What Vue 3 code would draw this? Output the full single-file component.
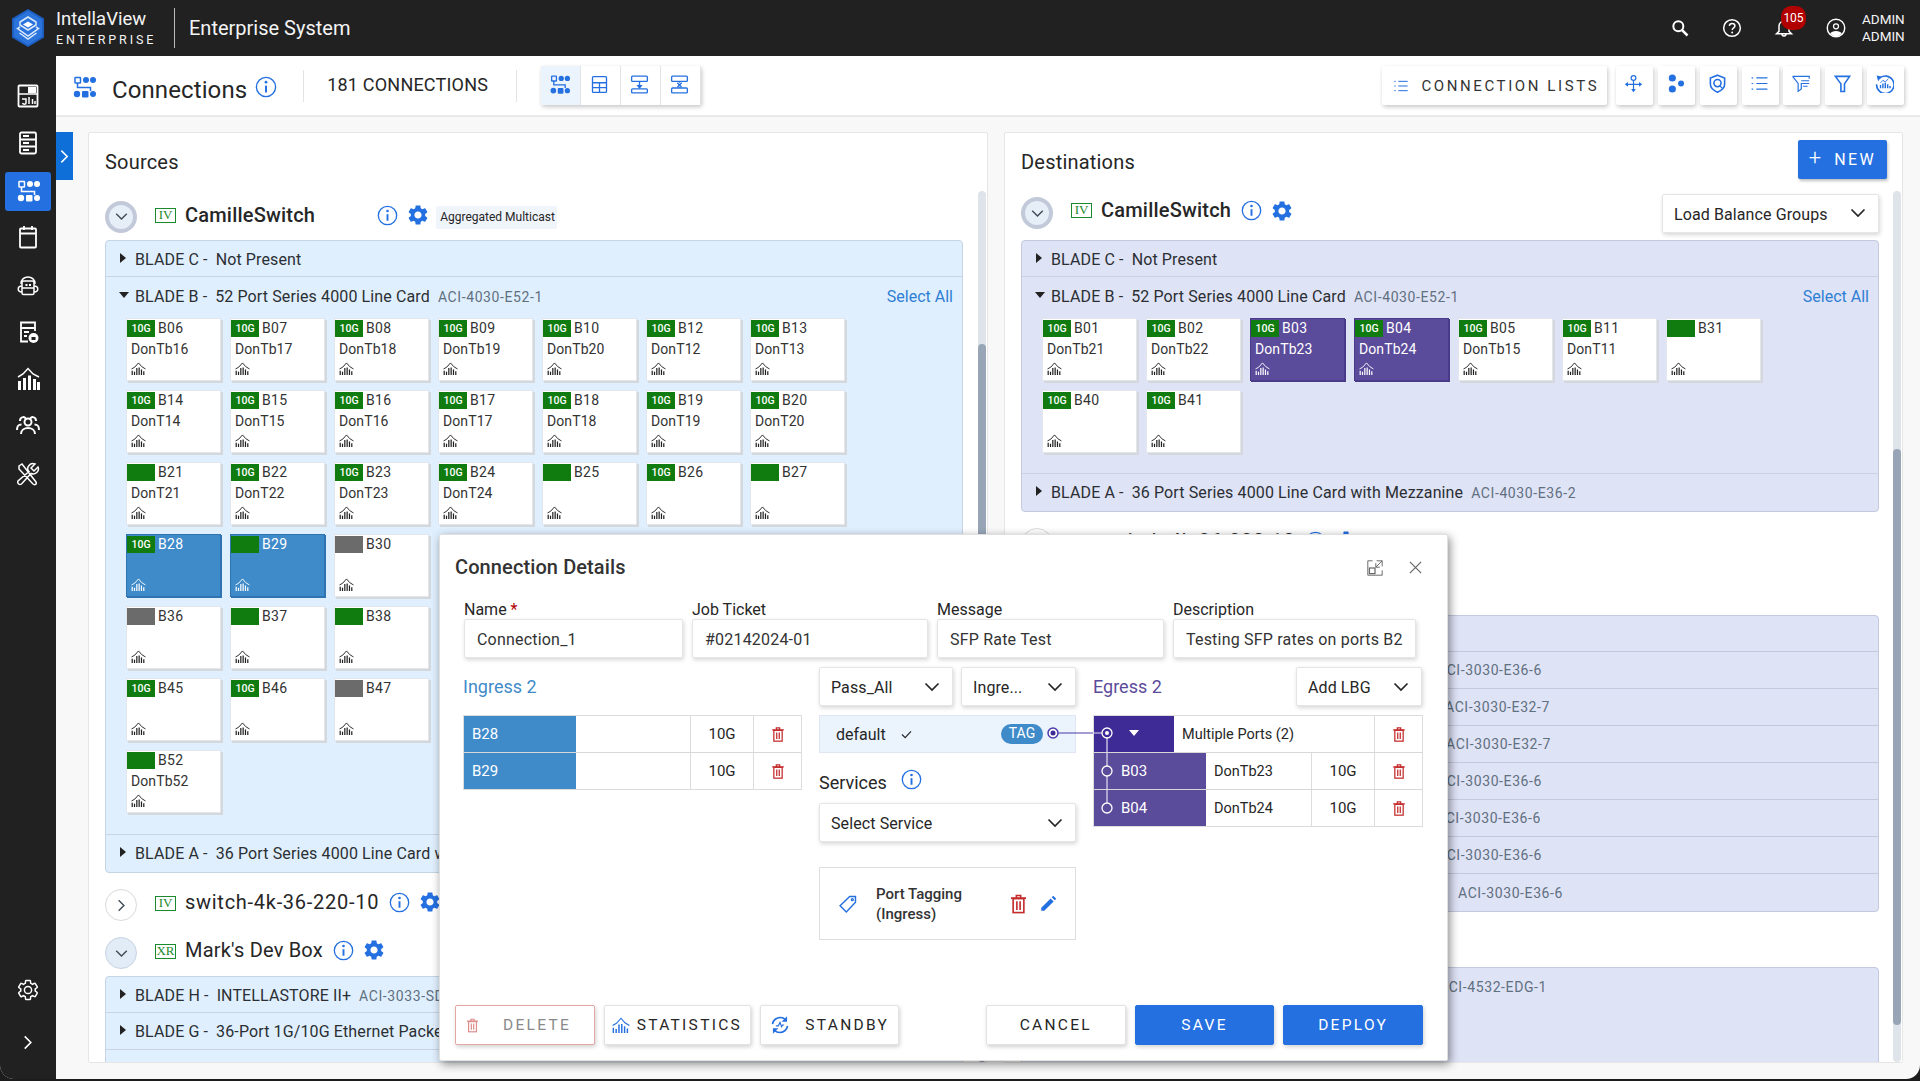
<script setup>
const c = (p, n = '', sp = true, led = 'g', sel = false) => ({ p, n, sp, led, sel })
const srcRows = [
  [c('B06','DonTb16'),c('B07','DonTb17'),c('B08','DonTb18'),c('B09','DonTb19'),c('B10','DonTb20'),c('B12','DonT12'),c('B13','DonT13')],
  [c('B14','DonT14'),c('B15','DonT15'),c('B16','DonT16'),c('B17','DonT17'),c('B18','DonT18'),c('B19','DonT19'),c('B20','DonT20')],
  [c('B21','DonT21',false),c('B22','DonT22'),c('B23','DonT23'),c('B24','DonT24'),c('B25','',false),c('B26'),c('B27','',false)],
  [c('B28','',true,'g',true),c('B29','',false,'g',true),c('B30','',false,'x')],
  [c('B36','',false,'x'),c('B37','',false),c('B38','',false)],
  [c('B45'),c('B46'),c('B47','',false,'x')],
  [c('B52','DonTb52',false)],
]
const dstRows = [
  [c('B01','DonTb21'),c('B02','DonTb22'),c('B03','DonTb23',true,'g',true),c('B04','DonTb24',true,'g',true),c('B05','DonTb15'),c('B11','DonT11'),c('B31','',false)],
  [c('B40'),c('B41')],
]
const dstCodes = [
  { code: '', left: 0 },
  { code: 'ACI-3030-E36-6', left: 415 },
  { code: 'ACI-3030-E32-7', left: 423 },
  { code: 'ACI-3030-E32-7', left: 424 },
  { code: 'ACI-3030-E36-6', left: 415 },
  { code: 'ACI-3030-E36-6', left: 414 },
  { code: 'ACI-3030-E36-6', left: 415 },
  { code: 'ACI-3030-E36-6', left: 436 },
]
const topTools = ['flow', 'table', 'split-down', 'split-x']
const rightTools = ['move', 'dots', 'shield', 'list', 'filter-list', 'funnel', 'history']
const sideTop = ['dash', 'server', 'flow', 'calendar', 'robot', 'doclock', 'chart', 'people', 'tools']
</script>

<template>
  <div class="app">
    <svg class="sprite" aria-hidden="true">
      <symbol id="logo" viewBox="0 0 36 38">
        <path d="M18 0 34 9.500V28.500L18 38 2 28.500V9.500Z" fill="#1f5fc4" />
        <path d="M18 2 32 10.500V27.500L18 36 4 27.500V10.500Z" fill="#2a74dc" />
        <g fill="none" stroke="#dbe9fb" stroke-width="1.500">
          <path d="M18 8 26 13V16L18 21 10 16V13Z" />
          <path d="M10 18 7.500 19.500 18 27 28.500 19.500 26 18" />
          <path d="M9.500 24 18 30 26.500 24" />
        </g>
        <path d="M18 12.500 23 15.500 18 18.500 13 15.500Z" fill="#fff" />
      </symbol>
      <symbol id="flow" viewBox="0 0 24 24">
        <rect x="3" y="2.500" width="5.500" height="5.500" rx=".6" />
        <circle cx="14" cy="5" r="3" fill="currentColor" stroke="none" />
        <circle cx="21" cy="5" r="3" fill="currentColor" stroke="none" />
        <path d="M5.500 8V12.500H18.500V16" />
        <circle cx="5" cy="19" r="3.200" fill="currentColor" stroke="none" />
        <rect x="10" y="16" width="6.500" height="6.500" rx="1" fill="currentColor" stroke="none" />
        <circle cx="21" cy="19" r="3" fill="currentColor" stroke="none" />
      </symbol>
      <symbol id="table" viewBox="0 0 24 24">
        <rect x="4" y="3" width="16" height="18" rx="1" /><path d="M4 10H20M12 10V21M4 15.500H20" />
      </symbol>
      <symbol id="split-down" viewBox="0 0 24 24">
        <rect x="3" y="2.500" width="18" height="6" rx="1" /><rect x="3" y="17" width="18" height="4.500" rx="1" />
        <path d="M12 8.500V16" /><path d="M8.500 12.500H15.500L12 17Z" fill="currentColor" stroke="none" />
      </symbol>
      <symbol id="split-x" viewBox="0 0 24 24">
        <rect x="3" y="2.500" width="18" height="6" rx="1" /><rect x="3" y="16" width="18" height="5.500" rx="1" />
        <path d="M12 8.500V10M12 14.500V16M9.500 10 14.500 15M14.500 10 9.500 15" />
      </symbol>
      <symbol id="lines" viewBox="0 0 24 24">
        <path d="M8 5H22M8 12H22M8 19H22" /><path d="M2 5H4M2 12H4M2 19H4" />
      </symbol>
      <symbol id="list" viewBox="0 0 24 24">
        <path d="M8 5H22M8 12H22M8 19H22" /><path d="M2 5H4M2 12H4M2 19H4" />
      </symbol>
      <symbol id="move" viewBox="0 0 24 24">
        <circle cx="12" cy="5" r="3" /><path d="M12 8V22M3 13H21" />
        <path d="M1 13 5 10V16ZM23 13 19 10V16ZM12 23 9 19H15Z" fill="currentColor" stroke="none" />
      </symbol>
      <symbol id="dots" viewBox="0 0 24 24">
        <circle cx="8" cy="5" r="4.500" fill="currentColor" stroke="none" />
        <circle cx="8" cy="19" r="4.500" fill="currentColor" stroke="none" />
        <circle cx="19" cy="12" r="3.800" fill="currentColor" stroke="none" />
      </symbol>
      <symbol id="shield" viewBox="0 0 24 24">
        <path d="M12 1.500 21 5V13C21 18 16.500 21 12 23 7.500 21 3 18 3 13V5Z" stroke-width="2" />
        <circle cx="12" cy="11.500" r="4.500" stroke-width="2" /><path d="M15 15 18 18" />
      </symbol>
      <symbol id="filter-list" viewBox="0 0 24 24">
        <path d="M2 3H23V6M2 3 9 12V22L13 19V12H15" />
        <path d="M13 8.500H23M15 12H23M15 15.500H21" />
      </symbol>
      <symbol id="funnel" viewBox="0 0 24 24">
        <path d="M3 3H21L14.500 12.500V22H10V12.500Z" stroke-width="2" />
      </symbol>
      <symbol id="history" viewBox="0 0 24 24">
        <path d="M5 6A11 11 0 1 1 2 13" stroke-width="2" /><path d="M2 2 8 3 4 9Z" fill="currentColor" stroke="none" />
        <path d="M7 18V14M10 18V12M13 18V11M16 18V13M19 18V15" stroke-width="1.800" />
        <path d="M7 11 10 8 13 10 17 6" stroke-width="1.200" />
      </symbol>
      <symbol id="info" viewBox="0 0 24 24">
        <circle cx="12" cy="12" r="10.500" /><path d="M12 10.500V18" stroke-width="2.200" /><circle cx="12" cy="6.800" r="1.500" fill="currentColor" stroke="none" />
      </symbol>
      <symbol id="gear" viewBox="0 0 24 24">
        <path fill="currentColor" stroke="none" d="M19.140 12.940c.04-.3.06-.61.06-.94 0-.32-.02-.64-.07-.94l2.030-1.580c.18-.14.23-.41.12-.61l-1.920-3.320c-.12-.22-.37-.29-.59-.22l-2.390.96c-.5-.38-1.030-.7-1.620-.94l-.36-2.540c-.04-.24-.24-.41-.48-.41h-3.840c-.24 0-.43.17-.47.41l-.36 2.540c-.59.24-1.130.57-1.620.94l-2.390-.96c-.22-.08-.47 0-.59.22L2.740 8.870c-.12.21-.08.47.12.61l2.030 1.580c-.05.3-.09.63-.09.94s.02.64.07.94l-2.030 1.580c-.18.14-.23.41-.12.61l1.920 3.320c.12.22.37.29.59.22l2.390-.96c.5.38 1.030.7 1.620.94l.36 2.540c.05.24.24.41.48.41h3.840c.24 0 .44-.17.47-.41l.36-2.540c.59-.24 1.130-.56 1.620-.94l2.390.96c.22.08.47 0 .59-.22l1.920-3.320c.12-.22.07-.47-.12-.61l-2.010-1.580zM12 15.600c-1.980 0-3.600-1.620-3.600-3.600s1.620-3.600 3.600-3.600 3.600 1.620 3.600 3.600-1.620 3.600-3.600 3.600z" />
      </symbol>
      <symbol id="gear-line" viewBox="0 0 24 24">
        <path d="M19.140 12.940c.04-.3.06-.61.06-.94 0-.32-.02-.64-.07-.94l2.030-1.580c.18-.14.23-.41.12-.61l-1.920-3.320c-.12-.22-.37-.29-.59-.22l-2.390.96c-.5-.38-1.030-.7-1.620-.94l-.36-2.540c-.04-.24-.24-.41-.48-.41h-3.840c-.24 0-.43.17-.47.41l-.36 2.540c-.59.24-1.130.57-1.620.94l-2.390-.96c-.22-.08-.47 0-.59.22L2.740 8.870c-.12.21-.08.47.12.61l2.030 1.580c-.05.3-.09.63-.09.94s.02.64.07.94l-2.030 1.580c-.18.14-.23.41-.12.61l1.920 3.320c.12.22.37.29.59.22l2.390-.96c.5.38 1.030.7 1.620.94l.36 2.540c.05.24.24.41.48.41h3.840c.24 0 .44-.17.47-.41l.36-2.540c.59-.24 1.130-.56 1.620-.94l2.390.96c.22.08.47 0 .59-.22l1.920-3.320c.12-.22.07-.47-.12-.61l-2.010-1.580z" />
        <circle cx="12" cy="12" r="3.600" />
      </symbol>
      <symbol id="stat" viewBox="0 0 16 14">
        <path d="M1.200 14V9.500M3.700 14V10.500M6.200 14V6.500M8.700 14V6M11.200 14V8M13.700 14V10" stroke-width="1.300" />
        <path d="M.5 7.500 4 5.500 8 1 11.500 5 15.500 7.500" stroke-width="1" />
      </symbol>
      <symbol id="trash" viewBox="0 0 14 18">
        <rect x="2" y="4" width="10" height="13" /><path d="M0 3.500H14M5 3.500V1H9V3.500M5.500 6.500V14.500M8.500 6.500V14.500" />
      </symbol>
      <symbol id="down" viewBox="0 0 16 10"><path d="M1.500 1.500 8 8 14.500 1.500" stroke-width="1.700" /></symbol>
      <symbol id="right" viewBox="0 0 10 16"><path d="M1.500 1.500 8 8 1.500 14.500" stroke-width="1.700" /></symbol>
      <symbol id="search" viewBox="0 0 24 24"><circle cx="10" cy="10" r="6" stroke-width="2.400" /><path d="M14.500 14.500 21 21" stroke-width="3" /></symbol>
      <symbol id="help" viewBox="0 0 24 24">
        <circle cx="12" cy="12" r="10" stroke-width="1.800" /><path d="M8.800 9.500C9 7 11 6.500 12.200 6.500 14 6.500 15.500 7.800 15.500 9.500 15.500 11.800 12.200 11.800 12.200 14.500" stroke-width="1.800" /><circle cx="12.200" cy="17.500" r="1.200" fill="currentColor" stroke="none" />
      </symbol>
      <symbol id="bell" viewBox="0 0 24 24">
        <path d="M6 16V10C6 6 9 4 12 4S18 6 18 10V16L21 19H3ZM9.500 19C9.500 22.500 14.500 22.500 14.500 19" stroke-width="1.800" />
      </symbol>
      <symbol id="user" viewBox="0 0 24 24">
        <circle cx="12" cy="12" r="10.500" stroke-width="1.700" /><circle cx="12" cy="10" r="3" stroke-width="1.500" />
        <path d="M5 19C7 14.500 17 14.500 19 19 15 23 9 23 5 19Z" fill="currentColor" stroke="none" />
      </symbol>
      <symbol id="dash" viewBox="0 0 24 24">
        <rect x="2.500" y="1.500" width="19" height="21" rx="1" stroke-width="1.800" /><rect x="12" y="3" width="8" height="6" fill="currentColor" stroke="none" />
        <path d="M2.500 10H21.500M6 15H10V19C10 20.500 7 20.500 6.500 19M13 13V20M16.500 15V20M19 17V20" stroke-width="1.500" />
      </symbol>
      <symbol id="server" viewBox="0 0 24 24">
        <rect x="4" y="1.500" width="16" height="21" rx="1.500" stroke-width="1.800" /><path d="M4 8.500H20M4 15.500H20M7 5H13M7 12H13M7 19H13" stroke-width="1.800" />
      </symbol>
      <symbol id="calendar" viewBox="0 0 24 24">
        <rect x="4" y="3.500" width="16" height="19" rx="1" stroke-width="1.800" /><path d="M4 8.500H20M8 1V5M16 1V5" stroke-width="1.800" />
      </symbol>
      <symbol id="robot" viewBox="0 0 24 24">
        <path d="M5 11C5 1.500 19 1.500 19 11" stroke-width="1.500" /><rect x="6" y="8" width="12" height="13.500" rx="1.500" stroke-width="1.500" />
        <path d="M6 13C1 13 1 19 6 19M18 13C23 13 23 19 18 19M6 15H18" stroke-width="1.500" /><rect x="9.500" y="11" width="2" height="2" fill="currentColor" stroke="none" /><rect x="13" y="11" width="2" height="2" fill="currentColor" stroke="none" />
      </symbol>
      <symbol id="doclock" viewBox="0 0 24 24">
        <path d="M12 21.500H5V2.500H19V11M5 8H19M8 12H13M8 16H11" stroke-width="1.800" /><circle cx="17.500" cy="18" r="5" fill="currentColor" stroke="none" /><rect x="15.500" y="17" width="4" height="3" fill="#212121" stroke="none" />
      </symbol>
      <symbol id="chart" viewBox="0 0 24 24">
        <path d="M3.500 23V14M8.500 23V11M13.500 23V8.500M18.500 23V12M22.500 23V15" stroke-width="3" /><path d="M2 10 7 7 12 1.500 17 7 23 10" stroke-width="1.500" />
      </symbol>
      <symbol id="people" viewBox="0 0 24 24">
        <circle cx="12" cy="8" r="3.500" stroke-width="2" /><path d="M5 20C5 12 19 12 19 20M4 7C4 2 10 2 10 6M20 7C20 2 14 2 14 6M1 16C1 11 3 10.500 5.500 10.500M23 16C23 11 21 10.500 18.500 10.500" stroke-width="2" />
      </symbol>
      <symbol id="tools" viewBox="0 0 24 24">
        <path d="M3 4 6 2 20 20C21 22 19 23.500 17 22L3 7ZM22 5 18 9 15 6 19 2C14 0 9.500 6 13 9.500L2 19C1 21.500 3.500 23.500 5.500 22L15 11.500C19 13.500 24 9 22 5Z" stroke-width="1.500" />
      </symbol>
      <symbol id="tag" viewBox="0 0 24 24">
        <path d="M14 3H21V10L10 21.500 2.500 14ZM17 6.500 17 6.500" stroke-width="1.700" /><circle cx="17.200" cy="6.800" r="1.200" />
      </symbol>
      <symbol id="pencil" viewBox="0 0 24 24">
        <path d="M3 17 15.500 4.500 19.500 8.500 7 21H3ZM17 3 19 1 23 5 21 7Z" fill="currentColor" stroke="none" />
      </symbol>
      <symbol id="sync" viewBox="0 0 24 24">
        <path d="M3 11C3.500 6 8 3 12.500 3 15 3 17 4 18.500 5.500M21 13C20.500 18 16 21 11.500 21 9 21 7 20 5.500 18.500" stroke-width="2" />
        <path d="M20.500 1.500V8H14ZM3.500 22.500V16H10Z" fill="currentColor" stroke="none" /><path d="M7 13 10 13 12 9 14 14 15 12 17 12" stroke-width="1.400" />
      </symbol>
      <symbol id="expand" viewBox="0 0 20 20">
        <path d="M7 1H1V19H19V13M1 1M12 1H19V8M19 1 11 9M11 4V9H16" stroke-width="1.200" />
        <rect x="3" y="10" width="7" height="7" />
      </symbol>
      <symbol id="close" viewBox="0 0 16 16"><path d="M2 2 14 14M14 2 2 14" stroke-width="1.300" /></symbol>
    </svg>

    <header class="topbar">
      <svg class="logo"><use href="#logo" /></svg>
      <div class="brand"><div class="brand-a">IntellaView</div><div class="brand-b">ENTERPRISE</div></div>
      <div class="brand-div"></div>
      <div class="sys">Enterprise System</div>
      <div class="top-right">
        <svg class="i ti"><use href="#search" /></svg>
        <svg class="i ti"><use href="#help" /></svg>
        <div class="bell"><svg class="i ti"><use href="#bell" /></svg><span class="bell-badge">105</span></div>
        <svg class="i ti"><use href="#user" /></svg>
        <div class="admin"><div>ADMIN</div><div>ADMIN</div></div>
      </div>
    </header>

    <div class="shell">
      <nav class="side">
        <div class="side-items">
          <div v-for="s in sideTop" :key="s" class="side-item" :class="{ active: s === 'flow' }">
            <svg class="i si"><use :href="'#' + s" /></svg>
          </div>
        </div>
        <div class="side-foot">
          <svg class="i si"><use href="#gear-line" /></svg>
          <svg class="i sc"><use href="#right" /></svg>
        </div>
      </nav>

      <main class="main">
        <div class="toolbar">
          <svg class="i t-flow"><use href="#flow" /></svg>
          <h1 class="t-title">Connections</h1>
          <svg class="i t-info"><use href="#info" /></svg>
          <div class="t-div"></div>
          <div class="t-count">181 CONNECTIONS</div>
          <div class="t-div t-div2"></div>
          <div class="t-group">
            <div v-for="(t, i) in topTools" :key="t" class="t-btn" :class="{ on: i === 0 }"><svg class="i"><use :href="'#' + t" /></svg></div>
          </div>
          <div class="t-right">
            <div class="lists-btn"><svg class="i"><use href="#lines" /></svg><span>CONNECTION LISTS</span></div>
            <div v-for="t in rightTools" :key="t" class="r-btn"><svg class="i"><use :href="'#' + t" /></svg></div>
          </div>
        </div>

        <div class="content">
          <div class="tab"><svg class="i tab-i"><use href="#right" /></svg></div>

          <section class="panel src">
            <h2 class="p-title">Sources</h2>
            <div class="scroll-body">
              <div class="head">
                <div class="tog tog-focus"><svg class="i"><use href="#down" /></svg></div>
                <span class="iv">IV</span><span class="sw-name strong">CamilleSwitch</span>
                <svg class="i hi hi-far"><use href="#info" /></svg><svg class="hg"><use href="#gear" /></svg>
                <span class="agg">Aggregated Multicast</span>
              </div>
              <div class="blade">
                <div class="b-row"><i class="car"></i><span class="b-t">BLADE C -</span><span>Not Present</span></div>
                <div class="b-open">
                  <div class="b-row bare"><i class="car dn"></i><span class="b-t">BLADE B -</span><span>52 Port Series 4000 Line Card</span><span class="code">ACI-4030-E52-1</span><span class="all">Select All</span></div>
                  <div class="cards">
                    <div v-for="(r, ri) in srcRows" :key="ri" class="c-row">
                      <div v-for="k in r" :key="k.p" class="card" :class="{ 'sel-b': k.sel }">
                        <div class="c-top"><span class="sp" :class="{ gray: k.led === 'x' }">{{ k.sp ? '10G' : '' }}</span><span class="port">{{ k.p }}</span></div>
                        <div class="c-name">{{ k.n }}</div>
                        <svg class="i c-stat"><use href="#stat" /></svg>
                      </div>
                    </div>
                  </div>
                </div>
                <div class="b-row last"><i class="car"></i><span class="b-t">BLADE A -</span><span>36 Port Series 4000 Line Card with Mezzanine</span><span class="code">ACI-4030-E36-2</span></div>
              </div>
              <div class="head gap1">
                <div class="tog tog-plain"><svg class="i r"><use href="#right" /></svg></div>
                <span class="iv">IV</span><span class="sw-name">switch-4k-36-220-10</span>
                <svg class="i hi"><use href="#info" /></svg><svg class="hg"><use href="#gear" /></svg>
              </div>
              <div class="head gap2">
                <div class="tog tog-open"><svg class="i"><use href="#down" /></svg></div>
                <span class="iv">XR</span><span class="sw-name">Mark's Dev Box</span>
                <svg class="i hi"><use href="#info" /></svg><svg class="hg"><use href="#gear" /></svg>
              </div>
              <div class="blade">
                <div class="b-row"><i class="car"></i><span class="b-t">BLADE H -</span><span>INTELLASTORE II+</span><span class="code">ACI-3033-SD</span></div>
                <div class="b-row"><i class="car"></i><span class="b-t">BLADE G -</span><span>36-Port 1G/10G Ethernet Packet Broker</span></div>
                <div class="b-row"><i class="car"></i><span class="b-t">BLADE F -</span><span>36-Port 100/100 Ethernet</span></div>
              </div>
            </div>
            <div class="bar"><div class="thumb thumb-src"></div></div>
          </section>

          <section class="panel dst">
            <div class="d-title">
              <h2 class="p-title flat">Destinations</h2>
              <div class="new-btn"><span class="plus">+</span><span>NEW</span></div>
            </div>
            <div class="scroll-body">
              <div class="head dhead">
                <div class="tog tog-focus"><svg class="i"><use href="#down" /></svg></div>
                <span class="iv">IV</span><span class="sw-name strong">CamilleSwitch</span>
                <svg class="i hi"><use href="#info" /></svg><svg class="hg"><use href="#gear" /></svg>
                <div class="sel lbg"><span>Load Balance Groups</span><svg class="i"><use href="#down" /></svg></div>
              </div>
              <div class="blade lav">
                <div class="b-row"><i class="car"></i><span class="b-t">BLADE C -</span><span>Not Present</span></div>
                <div class="b-open">
                  <div class="b-row bare"><i class="car dn"></i><span class="b-t">BLADE B -</span><span>52 Port Series 4000 Line Card</span><span class="code">ACI-4030-E52-1</span><span class="all">Select All</span></div>
                  <div class="cards dcards">
                    <div v-for="(r, ri) in dstRows" :key="ri" class="c-row">
                      <div v-for="k in r" :key="k.p" class="card" :class="{ 'sel-p': k.sel }">
                        <div class="c-top"><span class="sp">{{ k.sp ? '10G' : '' }}</span><span class="port">{{ k.p }}</span></div>
                        <div class="c-name">{{ k.n }}</div>
                        <svg class="i c-stat"><use href="#stat" /></svg>
                      </div>
                    </div>
                  </div>
                </div>
                <div class="b-row last"><i class="car"></i><span class="b-t">BLADE A -</span><span>36 Port Series 4000 Line Card with Mezzanine</span><span class="code">ACI-4030-E36-2</span></div>
              </div>
              <div class="head dgap">
                <div class="tog tog-plain"><svg class="i r"><use href="#right" /></svg></div>
                <span class="iv">IV</span><span class="sw-name">switch-4k-36-220-10</span>
                <svg class="i hi"><use href="#info" /></svg><svg class="hg"><use href="#gear" /></svg>
              </div>
              <div class="blade lav dblade2">
                <div v-for="(r, i) in dstCodes" :key="i" class="b-row" :class="{ last: i === dstCodes.length - 1 }">
                  <span class="code flat" :style="{ marginLeft: r.left + 'px' }">{{ r.code }}</span>
                </div>
              </div>
              <div class="blade lav dblade3">
                <div class="b-row noline"><span class="code c3">ACI-4532-EDG-1</span></div>
              </div>
            </div>
            <div class="bar"><div class="thumb thumb-dst"></div></div>
          </section>
        </div>
      </main>
    </div>

    <div class="modal">
      <div class="m-head">
        <h3>Connection Details</h3>
        <svg class="i m-exp"><use href="#expand" /></svg>
        <svg class="i m-close"><use href="#close" /></svg>
      </div>
      <div class="m-fields">
        <label><span class="lab">Name <em>*</em></span><div class="inp">Connection_1</div></label>
        <label><span class="lab">Job Ticket</span><div class="inp">#02142024-01</div></label>
        <label><span class="lab">Message</span><div class="inp">SFP Rate Test</div></label>
        <label><span class="lab">Description</span><div class="inp"><span class="clip">Testing SFP rates on ports B28</span></div></label>
      </div>
      <div class="m-lower">
        <div class="col-in">
          <div class="col-h ing">Ingress 2</div>
          <div class="tb">
            <div class="tr"><span class="td t-port">B28</span><span class="td t-sp"></span><span class="td t-rate">10G</span><span class="td t-del"><svg class="i tr-i"><use href="#trash" /></svg></span></div>
            <div class="tr"><span class="td t-port">B29</span><span class="td t-sp"></span><span class="td t-rate">10G</span><span class="td t-del"><svg class="i tr-i"><use href="#trash" /></svg></span></div>
          </div>
        </div>
        <div class="col-mid">
          <div class="sel-row">
            <div class="sel pass"><span>Pass_All</span><svg class="i"><use href="#down" /></svg></div>
            <div class="sel ingre"><span>Ingre...</span><svg class="i"><use href="#down" /></svg></div>
          </div>
          <div class="def"><span>default</span><svg class="i ck" viewBox="0 0 12 10"><path d="M1 5 4.500 8.500 11 1.500" /></svg><span class="tagp">TAG</span></div>
          <div class="svc"><span>Services</span><svg class="i"><use href="#info" /></svg></div>
          <div class="sel full"><span>Select Service</span><svg class="i"><use href="#down" /></svg></div>
          <div class="ptag">
            <svg class="i pt-i"><use href="#tag" /></svg>
            <div class="pt-t">Port Tagging<br />(Ingress)</div>
            <svg class="i pt-del"><use href="#trash" /></svg>
            <svg class="i pt-ed"><use href="#pencil" /></svg>
          </div>
        </div>
        <div class="col-eg">
          <div class="eg-h"><div class="col-h egr">Egress 2</div><div class="sel addl"><span>Add LBG</span><svg class="i"><use href="#down" /></svg></div></div>
          <div class="tb eg">
            <div class="tr"><span class="td e-multi"><i class="car wdn"></i></span><span class="td e-label">Multiple Ports (2)</span><span class="td t-del"><svg class="i tr-i"><use href="#trash" /></svg></span></div>
            <div class="tr"><span class="td e-port">B03</span><span class="td e-nm">DonTb23</span><span class="td e-rate">10G</span><span class="td t-del"><svg class="i tr-i"><use href="#trash" /></svg></span></div>
            <div class="tr"><span class="td e-port">B04</span><span class="td e-nm">DonTb24</span><span class="td e-rate">10G</span><span class="td t-del"><svg class="i tr-i"><use href="#trash" /></svg></span></div>
          </div>
        </div>
        <svg class="wire" width="80" height="120" viewBox="0 0 80 120">
          <path d="M11 18H46" stroke="#4a3aa8" fill="none" stroke-width="1.200" />
          <circle cx="6" cy="18" r="5" fill="#fff" stroke="#4a3aa8" stroke-width="1.500" /><circle cx="6" cy="18" r="2.500" fill="#3f2b96" />
          <path d="M46 18H60M60 18V93" stroke="#e3e0f3" fill="none" stroke-width="1.200" />
          <circle cx="60" cy="18" r="5" fill="#3f2b96" stroke="#fff" stroke-width="1.300" /><circle cx="60" cy="18" r="2" fill="#fff" />
          <circle cx="60" cy="56" r="5" fill="#5b4b9b" stroke="#fff" stroke-width="1.300" />
          <circle cx="60" cy="93" r="5" fill="#5b4b9b" stroke="#fff" stroke-width="1.300" />
        </svg>
      </div>
      <div class="m-foot">
        <div class="fb del"><svg class="i"><use href="#trash" /></svg><span>DELETE</span></div>
        <div class="fb stats"><svg class="i"><use href="#stat" /></svg><span>STATISTICS</span></div>
        <div class="fb standby"><svg class="i"><use href="#sync" /></svg><span>STANDBY</span></div>
        <div class="fb cancel">CANCEL</div>
        <div class="fb pri">SAVE</div>
        <div class="fb pri">DEPLOY</div>
      </div>
    </div>
  </div>
</template>

<style>
html, body { margin: 0; background: #1c1c1c; }
</style>

<style scoped>
.app { position: relative; width: 1920px; height: 1079px; overflow: hidden; background: #f8f8f8; border-radius: 0 0 14px 14px; font-family: Roboto, "Liberation Sans", sans-serif; color: #262626; font-size: 15px; }
.sprite { position: absolute; width: 0; height: 0; }
.i { fill: none; stroke: currentColor; stroke-width: 1.500; }
h1, h2, h3 { margin: 0; font-weight: 400; }

.topbar { height: 56px; background: #212121; color: #f4f4f4; display: flex; align-items: center; }
.logo { width: 36px; height: 38px; margin-left: 10px; }
.brand { margin-left: 10px; width: 118px; }
.brand-a { font-size: 18.500px; line-height: 22px; margin-top: -1px; }
.brand-b { font-size: 12.500px; line-height: 16px; letter-spacing: 2.850px; margin-top: 2px; }
.brand-div { width: 1px; height: 40px; background: #bbb; }
.sys { margin-left: 14px; font-size: 20px; }
.top-right { margin-left: auto; display: flex; align-items: center; padding-right: 17px; }
.ti { width: 20px; height: 20px; color: #fff; margin-right: 32px; }
.bell { position: relative; display: flex; }
.bell-badge { position: absolute; left: 7px; top: -12px; width: 25px; height: 24px; border-radius: 10px; background: #b00000; color: #fff; font-size: 12px; text-align: center; line-height: 24px; }
.admin { font-size: 13.500px; line-height: 17px; margin-left: -16px; width: 41px; }

.shell { display: flex; height: calc(100% - 56px); }
.side { width: 56px; background: #212121; color: #fff; display: flex; flex-direction: column; justify-content: space-between; flex: none; }
.side-items { display: flex; flex-direction: column; align-items: center; padding-top: 20px; gap: 8.250px; }
.side-item { width: 46px; height: 39px; border-radius: 3px; display: flex; align-items: center; justify-content: center; }
.side-item.active { background: #2470e0; margin: 1px 0 -1px; }
.si { width: 24px; height: 24px; }
.side-foot { display: flex; flex-direction: column; align-items: center; padding-bottom: 29px; gap: 33px; }
.sc { width: 10px; height: 15px; }

.main { flex: 1; min-width: 0; display: flex; flex-direction: column; }
.toolbar { height: 59px; background: #fff; border-bottom: 2px solid #e9e9e9; display: flex; align-items: center; padding: 0 16px 0 16px; flex: none; box-sizing: content-box; }
.t-flow { width: 24px; height: 24px; color: #2470e0; margin-top: 3px; }
.t-title { font-size: 24px; margin-left: 16px; letter-spacing: .1px; margin-top: 8px; }
.t-info { width: 22px; height: 22px; color: #2470e0; margin-left: 8px; margin-top: 3px; }
.t-div { width: 1px; height: 32px; background: #e3e3e3; margin-left: 26px; }
.t-count { font-size: 18px; margin-left: 23px; margin-top: -2px; letter-spacing: .2px; }
.t-div2 { margin-left: 28px; }
.t-group { display: flex; margin-left: 24px; box-shadow: 1px 2px 4px rgba(0,0,0,.22); border-radius: 2px; }
.t-btn { width: 40px; height: 39px; display: flex; align-items: center; justify-content: center; background: #fff; color: #2470e0; border-right: 1px solid #e3e3e3; box-sizing: border-box; }
.t-btn.on { background: #ebf3fd; }
.t-btn svg { width: 21px; height: 21px; margin-right: 2px; margin-top: -3px; }
.t-right { margin-left: auto; display: flex; gap: 4.800px; }
.lists-btn { width: 225px; height: 39px; margin-right: 4px; background: #fff; border-radius: 2px; box-shadow: 1px 2px 4px rgba(0,0,0,.22); display: flex; align-items: center; font-size: 15px; letter-spacing: 2.600px; color: #333; }
.lists-btn svg { width: 16px; height: 16px; margin: 0 12px 0 11px; color: #2470e0; }
.r-btn { width: 37px; height: 39px; background: #fff; border-radius: 2px; box-shadow: 1px 2px 4px rgba(0,0,0,.22); display: flex; align-items: center; justify-content: center; color: #2470e0; }
.r-btn svg { width: 19px; height: 19px; margin: -4px 2px 0 0; }

.content { flex: 1; min-height: 0; display: flex; padding: 15px 17px 16px 0; position: relative; }
.tab { width: 17px; height: 48px; background: #0f6fd8; flex: none; display: flex; align-items: center; justify-content: center; margin-right: 15px; color: #fff; }
.tab-i { width: 9px; height: 15px; }
.panel { position: relative; background: #fff; border: 1px solid #e6e6e6; border-radius: 2px; display: flex; flex-direction: column; box-sizing: border-box; min-height: 0; }
.src { width: 900px; margin-right: 16px; }
.dst { width: 899px; }
.p-title { font-size: 20px; height: 67px; line-height: 58px; padding-left: 16px; letter-spacing: .2px; }
.p-title.flat { height: auto; }
.d-title { height: 60px; display: flex; justify-content: space-between; padding-right: 15px; flex: none; align-items: flex-start; }
.new-btn { margin-top: 7px; width: 89px; height: 39px; background: #2470e0; border-radius: 2px; color: #fff; display: flex; align-items: center; justify-content: center; gap: 13px; font-size: 16px; letter-spacing: 2.400px; box-shadow: 1px 2px 3px rgba(0,0,0,.25); }
.plus { font-size: 22px; font-weight: 300; letter-spacing: 0; line-height: 20px; margin-top: -4px; }
.scroll-body { flex: 1; min-height: 0; overflow: hidden; padding: 0 23px 0 16px; }
.src .scroll-body { padding-right: 24px; }

.head { display: flex; align-items: center; height: 33px; }
.gap1 { margin-top: 16px; height: 32px; }
.gap2 { margin-top: 16px; margin-bottom: 7px; height: 32px; }
.src .head:first-child { margin-bottom: 7px; }
.dhead { height: 32px; margin-top: 4px; margin-bottom: 11px; position: relative; }
.dgap { margin-top: 16px; height: 32px; }
.tog { width: 32px; height: 32px; border-radius: 50%; display: flex; align-items: center; justify-content: center; box-sizing: border-box; flex: none; color: #3e4a55; }
.tog svg { width: 13px; height: 9px; stroke-width: 1.300; }
.tog svg.r { width: 9px; height: 13px; }
.tog-focus { background: #e6eef8; border: 4px solid #c2c9d8; }
.tog-plain { background: #fff; border: 1px solid #dadada; }
.tog-open { background: #e2ecf7; border: 1px solid #c7d3e3; }
.iv { margin-left: 18px; margin-top: -2px; width: 21px; height: 15px; box-sizing: border-box; border: 1.500px solid #1b8a2e; color: #1b8a2e; font-family: "Liberation Serif", serif; font-size: 13px; line-height: 12px; text-align: center; flex: none; }
.sw-name { margin-left: 9px; margin-top: -6px; font-size: 20px; letter-spacing: .72px; color: #262626; }
.gap2 .sw-name { letter-spacing: .2px; }
.sw-name.strong { font-weight: 500; margin-top: -3px; letter-spacing: .2px; }
.hi { width: 21px; height: 21px; color: #2470e0; margin-left: 10px; margin-top: -6px; flex: none; }
.hi-far { margin-left: 62px; margin-top: -3px; }
.hg { width: 24px; height: 24px; color: #2470e0; margin-left: 8px; margin-top: -6px; flex: none; }
.hi-far + .hg { margin-top: -3px; }
.gap1 .iv, .gap2 .iv { margin-top: -4px; }
.agg { margin-left: 6px; background: #f0f4fb; font-size: 12px; height: 23px; line-height: 23px; padding: 0 4px; border-radius: 2px; width: 113px; white-space: nowrap; margin-top: 2px; }
.dhead .iv { margin-top: -5px; }
.dhead .sw-name { margin-top: -6px; }
.dhead .hi, .dhead .hg { margin-top: -5px; }
.sel { background: #fff; border: 1px solid #e5e5e5; border-radius: 2px; box-shadow: 1px 2px 4px rgba(0,0,0,.16); height: 39px; display: flex; align-items: center; justify-content: space-between; box-sizing: border-box; padding: 0 12px 0 11px; font-size: 16px; color: #262626; letter-spacing: .1px; }
.sel span { margin-top: 2px; }
.sel svg { width: 16px; height: 10px; flex: none; }
.lbg { margin-left: auto; width: 217px; }

.blade { background: #e0effe; border: 1px solid #c6d5e4; border-radius: 4px; }
.blade.lav { background: #dfe3f6; border-color: #c5c9df; }
.b-row { height: 37px; box-sizing: border-box; display: flex; align-items: center; padding-left: 14px; border-bottom: 1px solid #c9d3e2; font-size: 16px; white-space: nowrap; color: #2b2f33; letter-spacing: .12px; }
.blade > .b-row:first-child { height: 36px; padding-top: 2px; }
.b-row.bare { padding-top: 2px; }
.b-row.last, .b-row.bare { border-bottom: 0; }
.b-row.noline { border: 0; }
.car { display: block; width: 0; height: 0; border-style: solid; border-width: 5px 0 5px 6px; border-color: transparent transparent transparent #222; margin-right: 9px; margin-top: -3px; flex: none; }
.car.dn { border-width: 6px 5px 0; border-color: #222 transparent transparent; margin-left: -1px; margin-right: 6px; }
.b-t { margin-right: 8px; }
.code { color: #5f7080; font-size: 14px; margin-left: 8px; letter-spacing: .6px; }
.code.flat { margin-left: 0; }
.code.c3 { margin-left: 417px; }
.dblade2 .b-row, .dblade3 .b-row { padding-left: 0; padding-top: 0; }
.all { margin-left: auto; margin-right: 9px; color: #2e7fd3; letter-spacing: 0; }
.b-open { border-bottom: 1px solid #c9d3e2; }
.cards { padding: 5px 0 22px 21px; display: flex; flex-direction: column; gap: 11px; }
.dcards { padding-bottom: 21px; }
.c-row { display: flex; gap: 11px; }
.card { width: 93px; height: 61px; background: #fff; box-shadow: 0 0 0 1px #e2e6ea, 2px 2px 0 1px #d4d7db; display: flex; flex-direction: column; font-size: 14px; color: #333; }
.c-top { display: flex; height: 18px; align-items: center; }
.sp { width: 28px; height: 17px; background: #107c10; color: #fff; font-size: 10.500px; font-weight: 500; text-align: center; line-height: 17px; flex: none; }
.sp.gray { background: #6b6b6b; }
.port { margin-left: 3px; letter-spacing: .3px; }
.c-name { height: 21px; line-height: 23px; padding-left: 4px; margin-top: 1px; letter-spacing: .1px; white-space: nowrap; }
.c-stat { width: 15px; height: 13px; margin: 3px 0 0 4px; color: #1e1e1e; }
.sel-b { background: #3f8bca; color: #fff; box-shadow: 0 0 0 1px #2f73b0, 1px 1px 0 1px #2f73b0; }
.sel-p { background: #5b4b9b; color: #fff; box-shadow: 0 0 0 1px #4a3a8a, 1px 1px 0 1px #4a3a8a; }
.sel-b .c-stat, .sel-p .c-stat { color: #fff; }
.dblade2 { margin-top: 55px; }
.dblade3 { margin-top: 55px; height: 200px; }
.dblade2 .b-row { border-color: #c3c8dd; }

.bar { position: absolute; right: 1px; top: 58px; bottom: 0; width: 8px; background: #dfe4ea; border-radius: 4px; }
.thumb { position: absolute; left: 0; right: 0; background: #97a5b6; border-radius: 4px; }
.thumb-src { top: 153px; bottom: 0; }
.thumb-dst { top: 258px; bottom: 37px; }

.modal { position: absolute; left: 439px; top: 534px; width: 1009px; height: 527px; background: #fff; border: 1px solid #e0e0e0; border-radius: 2px; box-sizing: border-box; box-shadow: 2px 3px 10px rgba(0,0,0,.45); display: flex; flex-direction: column; }
.m-head { height: 65px; display: flex; align-items: center; padding: 0 24px 0 15px; flex: none; }
.m-head h3 { font-size: 20px; font-weight: 500; color: #333; letter-spacing: .1px; margin-top: -2px; }
.m-exp { width: 16px; height: 16px; margin-left: auto; color: #666; }
.m-close { width: 15px; height: 15px; margin-left: 25px; color: #666; }
.m-fields { display: grid; grid-template-columns: 219px 236px 227px 243px; gap: 9px; padding: 0 0 0 24px; flex: none; }
.m-fields label { display: flex; flex-direction: column; }
.lab { font-size: 16px; line-height: 19px; }
.lab em { color: #b00000; font-style: normal; }
.inp { height: 39px; box-sizing: border-box; border: 1px solid #e5e5e5; border-radius: 2px; box-shadow: 1px 2px 4px rgba(0,0,0,.16); padding: 0 12px; line-height: 39px; font-size: 16px; overflow: hidden; white-space: nowrap; color: #333; letter-spacing: .2px; }
.clip { display: block; overflow: hidden; }
.m-lower { position: relative; display: flex; padding: 9px 0 0 23px; gap: 17px; flex: none; }
.col-in { width: 339px; }
.col-h { font-size: 18px; height: 39px; line-height: 39px; }
.ing { color: #3f8bca; }
.egr { color: #5b4b9b; }
.tb { margin-top: 9px; border: 1px solid #dcdcdc; }
.tr { display: flex; height: 37px; border-bottom: 1px solid #d8d8d8; box-sizing: border-box; }
.tr:last-child { border-bottom: 0; height: 36px; }
.td { display: flex; align-items: center; box-sizing: border-box; font-size: 15px; height: 100%; }
.t-port { width: 112px; background: #3f8bca; color: #fff; padding-left: 8px; }
.t-sp { width: 114px; }
.t-rate { width: 64px; justify-content: center; border-left: 1px solid #dcdcdc; border-right: 1px solid #dcdcdc; }
.t-del { flex: 1; justify-content: center; }
.tr-i { width: 12px; height: 15px; color: #c42b2b; }
.col-mid { width: 257px; display: flex; flex-direction: column; }
.sel-row { display: flex; gap: 8px; }
.pass { width: 134px; }
.ingre { width: 115px; }
.def { margin-top: 9px; height: 38px; background: #ebf3fd; border: 1px solid #dfe6f2; box-sizing: border-box; display: flex; align-items: center; padding-left: 16px; font-size: 16px; }
.ck { width: 11px; height: 9px; margin-left: 15px; stroke-width: 1.300; }
.tagp { margin-left: auto; margin-right: 32px; width: 42px; height: 20px; border-radius: 10px; background: #3f8bca; color: #fff; font-size: 14px; line-height: 19px; text-align: center; }
.svc { display: flex; align-items: center; height: 50px; font-size: 18px; margin-top: 0; gap: 14px; padding-top: 9px; box-sizing: border-box; }
.svc svg { width: 21px; height: 21px; color: #2470e0; margin-top: -6px; }
.full { width: 257px; }
.ptag { margin-top: 25px; height: 73px; border: 1px solid #dedede; box-sizing: border-box; display: flex; align-items: center; padding: 0 18px 0 18px; }
.pt-i { width: 20px; height: 20px; color: #2470e0; }
.pt-t { margin-left: 18px; font-size: 15px; line-height: 20px; font-weight: 500; color: #333; }
.pt-del { width: 15px; height: 20px; color: #c42b2b; margin-left: auto; }
.pt-ed { width: 18px; height: 20px; color: #2470e0; margin-left: 13px; }
.col-eg { width: 330px; }
.eg-h { display: flex; justify-content: space-between; }
.addl { width: 126px; margin-right: 1px; }
.eg { margin-top: 9px; }
.e-multi { width: 80px; background: #3f2b96; }
.e-label { width: 201px; padding-left: 8px; border-right: 1px solid #dcdcdc; font-size: 14.500px; }
.e-port { width: 112px; background: #5b4b9b; color: #fff; padding-left: 27px; }
.e-nm { width: 105px; padding-left: 8px; font-size: 14.500px; }
.e-rate { width: 64px; justify-content: center; border-left: 1px solid #dcdcdc; border-right: 1px solid #dcdcdc; }
.car.wdn { border-width: 6px 5px 0; border-color: #fff transparent transparent; margin-left: 35px; margin-top: -3px; margin-right: 0; }
.wire { position: absolute; left: 607px; top: 57px; pointer-events: none; }
.m-foot { margin-top: auto; padding: 0 24px 15px 15px; display: flex; gap: 9px; }
.fb { height: 40px; width: 140px; box-sizing: border-box; border-radius: 2px; background: #fff; border: 1px solid #e3e3e3; box-shadow: 1px 2px 4px rgba(0,0,0,.18); display: flex; align-items: center; justify-content: center; font-size: 15.500px; letter-spacing: 2.300px; color: #262626; }
.fb svg { flex: none; }
.del { border-color: #e6a6a6; color: #8a8a8a; justify-content: flex-start; }
.del svg { width: 11px; height: 15px; color: #e08a8a; margin: 0 25px 0 11px; }
.stats { width: 148px; justify-content: flex-start; }
.stats svg { width: 18px; height: 16px; color: #2470e0; margin: 0 7px 0 7px; }
.standby { width: 139px; justify-content: flex-start; }
.standby svg { width: 20px; height: 20px; color: #2470e0; margin: 0 15px 0 9px; }
.cancel { margin-left: 78px; }
.pri { background: #2470e0; border-color: #2470e0; color: #fff; }
</style>
